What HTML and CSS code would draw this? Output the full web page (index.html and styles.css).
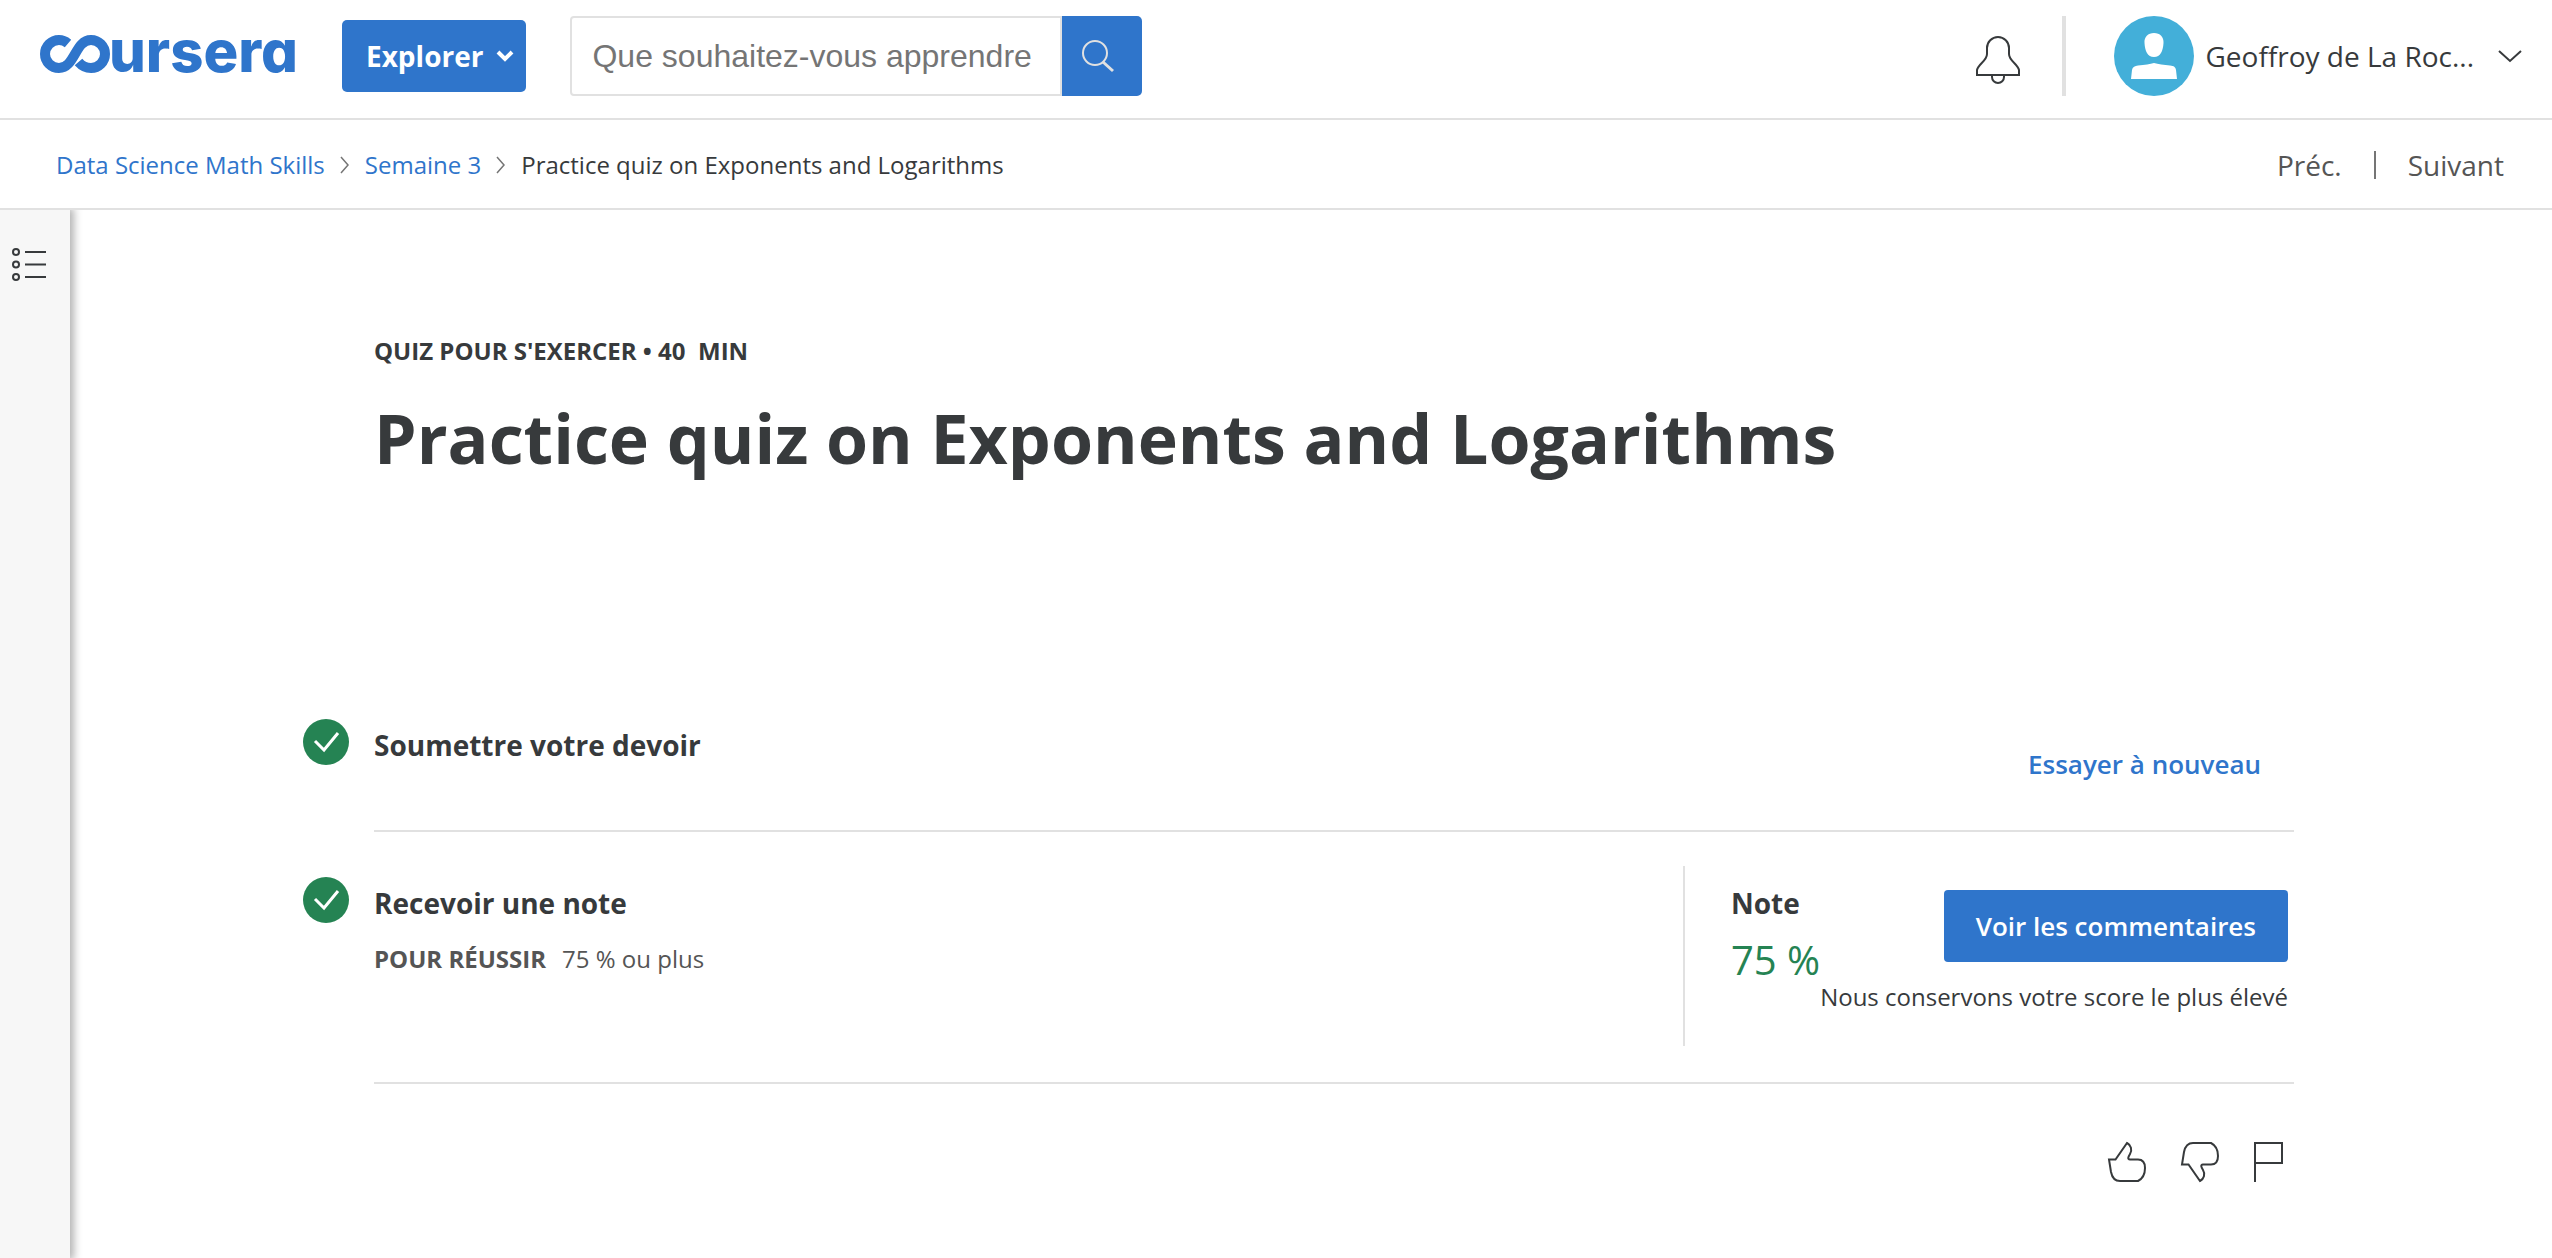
FILE: index.html
```html
<!DOCTYPE html>
<html lang="fr">
<head>
<meta charset="utf-8">
<title>Practice quiz on Exponents and Logarithms | Coursera</title>
<meta name="viewport" content="width=device-width, initial-scale=1">
<link rel="stylesheet" href="styles.css">
</head>
<body>
<header class="topbar">
  <a class="logo" href="#" aria-label="Coursera">
    <svg class="logo-mark" width="72" height="38" viewBox="0 0 72 38" aria-hidden="true"><path d="M28 8.500C25 6 22 5 19 5a14 14 0 1 0 0 28C35 33 35 5 51 5a14 14 0 1 1 0 28C46 33 42 31 38.500 27" fill="none" stroke="currentColor" stroke-width="10"/></svg>
    <span class="logo-text">ursera</span>
  </a>
  <button class="explore" type="button">Explorer
    <svg width="18" height="12" viewBox="0 0 18 12" aria-hidden="true"><path d="M2 2l7 7 7-7" fill="none" stroke="currentColor" stroke-width="4"/></svg>
  </button>
  <form class="search" role="search">
    <input class="search-input" type="text" placeholder="Que souhaitez-vous apprendre" aria-label="Que souhaitez-vous apprendre">
    <button class="search-button" type="button" aria-label="Rechercher">
      <svg width="34" height="34" viewBox="0 0 34 34" fill="none" stroke="currentColor" stroke-width="2" aria-hidden="true"><circle cx="14" cy="14" r="12"/><path d="M22 23l10 9" stroke-width="3"/></svg>
    </button>
  </form>
  <div class="account">
    <button class="bell" type="button" aria-label="Notifications">
      <svg width="46" height="50" viewBox="0 0 46 50" fill="none" stroke="currentColor" stroke-width="2" aria-hidden="true"><path d="M2 40V35C3 29 12 26 12 19V13a11 11 0 0 1 22 0V19C34 26 43 29 44 35V40ZM17 40V42a6 6 0 0 0 12 0V40"/></svg>
    </button>
    <button class="profile" type="button">
      <svg width="80" height="80" viewBox="0 0 80 80" aria-hidden="true"><circle cx="40" cy="40" r="40" fill="#43afd9"/><path d="M40 17c6 0 10 4 9.500 10C49 35 46.500 41 40 41S31 35 30.500 27C30 21 34 17 40 17ZM17 63L18 54C18.500 51 21 50 24 49.500 31 49 36 48 40 47 44 48 50 49 56 49.500 60 50 61.500 51 62 54L63 63Z" fill="#fff"/></svg>
      <span class="profile-name">Geoffroy de La Roc...</span>
      <svg width="24" height="14" viewBox="0 0 24 14" aria-hidden="true"><path d="M1 2l11 10L23 2" fill="none" stroke="currentColor" stroke-width="2"/></svg>
    </button>
  </div>
</header>

<div class="subbar">
  <nav class="crumbs" aria-label="Fil d'Ariane">
    <a href="#">Data Science Math Skills</a>
    <svg width="10" height="18" viewBox="0 0 10 18" aria-hidden="true"><path d="M1 1l7 8-7 8" fill="none" stroke="currentColor" stroke-width="1.500"/></svg>
    <a href="#">Semaine 3</a>
    <svg width="10" height="18" viewBox="0 0 10 18" aria-hidden="true"><path d="M1 1l7 8-7 8" fill="none" stroke="currentColor" stroke-width="1.500"/></svg>
    <span>Practice quiz on Exponents and Logarithms</span>
  </nav>
  <nav class="pager" aria-label="Navigation">
    <a href="#">Préc.</a>
    <a class="pager-next" href="#">Suivant</a>
  </nav>
</div>

<div class="layout">
  <aside class="rail">
    <button type="button" aria-label="Ouvrir le plan du cours">
      <svg width="36" height="36" viewBox="0 0 36 36" fill="none" stroke="currentColor" stroke-width="2" aria-hidden="true"><circle cx="4" cy="5" r="3"/><circle cx="4" cy="17.500" r="3"/><circle cx="4" cy="30" r="3"/><path d="M13 5h21M13 17.500h21M13 30h21"/></svg>
    </button>
  </aside>
  <main class="content">
    <p class="eyebrow">QUIZ POUR S'EXERCER • 40 &nbsp;MIN</p>
    <h1>Practice quiz on Exponents and Logarithms</h1>

    <section class="step step-submit">
      <svg class="check" width="46" height="46" viewBox="0 0 46 46" aria-hidden="true"><circle cx="23" cy="23" r="23" fill="#258353"/><path d="M12 22l9 9L35 14" fill="none" stroke="#fff" stroke-width="3"/></svg>
      <div class="step-body">
        <h2>Soumettre votre devoir</h2>
        <a class="retry" href="#">Essayer à nouveau</a>
      </div>
    </section>

    <section class="step step-grade">
      <svg class="check" width="46" height="46" viewBox="0 0 46 46" aria-hidden="true"><circle cx="23" cy="23" r="23" fill="#258353"/><path d="M12 22l9 9L35 14" fill="none" stroke="#fff" stroke-width="3"/></svg>
      <div class="step-body">
        <div>
          <h2>Recevoir une note</h2>
          <p class="pass"><strong>POUR RÉUSSIR</strong><span>75 % ou plus</span></p>
        </div>
        <div class="result">
          <div class="grade">
            <h2>Note</h2>
            <p class="score">75 %</p>
          </div>
          <div class="feedback">
            <button class="primary" type="button">Voir les commentaires</button>
            <p>Nous conservons votre score le plus élevé</p>
          </div>
        </div>
      </div>
    </section>

    <div class="reactions">
      <button type="button" aria-label="J'aime"><svg width="40" height="42" viewBox="0 0 40 42"><path d="M2 18.500H8.500L20 2C24 4 25.500 9 23 13 21.500 15.500 20 18.500 23 18.500H31C36 18.500 38 22 38 27 38 33 35 38 31 40H13C8 40 5 36 4 31Z"/></svg></button>
      <button type="button" aria-label="Je n'aime pas"><svg width="40" height="42" viewBox="0 0 40 42"><path d="M2 23.500H8.500L20 40C24 38 25.500 33 23 29 21.500 26.500 20 23.500 23 23.500H31C36 23.500 38 20 38 15 38 9 35 4 31 2H13C8 2 5 6 4 11Z"/></svg></button>
      <button type="button" aria-label="Signaler un problème"><svg width="32" height="42" viewBox="0 0 32 42"><path d="M2 41V2H29V22H2"/></svg></button>
    </div>
  </main>
</div>
</body>
</html>
```
FILE: styles.css
```css
* { box-sizing: border-box; }

body {
  margin: 0;
  min-height: 100vh;
  display: flex;
  flex-direction: column;
  background: #fff;
  color: #373a3c;
  font-family: "Open Sans", sans-serif;
  font-size: 24px;
  line-height: 36px;
}

h1, h2, p { margin: 0; }
a { color: #2f75cb; text-decoration: none; }
svg { display: block; flex: none; }

button {
  padding: 0;
  border: 0;
  background: none;
  color: inherit;
  font: inherit;
  cursor: pointer;
}

.topbar {
  display: flex;
  align-items: flex-start;
  height: 120px;
  padding: 16px 30px 0 40px;
  border-bottom: 2px solid #e1e1e1;
}

.logo {
  display: flex;
  width: 256px;
  margin-right: 46px;
  padding-top: 19px;
}

.logo-text {
  font-family: Inter, sans-serif;
  font-size: 58px;
  font-weight: 800;
  line-height: 32px;
  font-feature-settings: "cv11";
}

.logo-mark { margin-right: -3px; }

.explore {
  display: flex;
  align-items: center;
  gap: 13px;
  height: 72px;
  margin: 4px 44px 0 0;
  padding: 0 12px 0 24px;
  border-radius: 5px;
  background: #2f75cb;
  color: #fff;
  font-size: 28px;
  font-weight: 700;
}

.search { display: flex; }

.search-input {
  width: 492px;
  height: 80px;
  padding: 0 20px;
  border: 2px solid #e1e1e1;
  border-radius: 4px 0 0 4px;
  background: #fff;
  font-family: "Liberation Sans", sans-serif;
  font-size: 32px;
}

.search-input::placeholder { color: #757575; opacity: 1; }

.search-button {
  display: flex;
  align-items: center;
  width: 80px;
  padding-left: 19px;
  border-radius: 0 5px 5px 0;
  background: #2f75cb;
  color: #e1e1e1;
}

.account {
  display: flex;
  align-items: center;
  height: 80px;
  margin-left: auto;
}

.bell {
  margin-right: 41px;
  padding-top: 8px;
}

.profile {
  display: flex;
  align-items: center;
  height: 80px;
  padding-left: 48px;
  border-left: 4px solid #e1e1e1;
  font-size: 28px;
}

.profile-name { margin: 0 24px 0 11px; }

.subbar {
  display: flex;
  align-items: center;
  justify-content: space-between;
  height: 90px;
  padding: 2px 48px 0 56px;
  border-bottom: 2px solid #e1e1e1;
}

.crumbs {
  display: flex;
  align-items: center;
  gap: 15px;
}

.crumbs svg { color: #757575; }

.pager {
  display: flex;
  align-items: center;
  font-size: 28px;
  line-height: 28px;
}

.pager a { color: #555; }

.pager-next {
  margin-left: 32px;
  padding-left: 32px;
  border-left: 2px solid #757575;
}

.layout {
  display: flex;
  flex: 1;
}

.rail {
  flex: none;
  width: 70px;
  padding: 37px 0 0 12px;
  background: #f7f7f7;
  box-shadow: 2px 0 8px 2px rgba(0, 0, 0, 0.3);
  clip-path: inset(0 -16px 0 0);
}

.content {
  flex: 1;
  padding: 123px 258px 40px 233px;
}

.eyebrow {
  margin-left: 71px;
  font-weight: 700;
}

h1 {
  margin: 21px 0 233px 71px;
  font-size: 68px;
  line-height: 96px;
  font-weight: 700;
}

h2 {
  font-size: 28px;
  line-height: 36px;
  font-weight: 700;
}

.step { display: flex; gap: 25px; }

.step-body {
  display: flex;
  flex: 1;
  justify-content: space-between;
  border-bottom: 2px solid #e1e1e1;
}

.step-submit { height: 113px; }
.step-submit h2 { padding-top: 8px; }

.retry {
  padding: 27px 33px 0 0;
  font-size: 26px;
  font-weight: 600;
}

.step-grade {
  height: 252px;
  padding-top: 34px;
}

.step-grade .check { margin-top: 11px; }
.step-grade h2 { padding-top: 19px; }

.pass {
  display: flex;
  gap: 16px;
  margin-top: 20px;
  color: #555;
}

.result {
  display: flex;
  height: 180px;
  padding: 0 6px 0 46px;
  border-left: 2px solid #e1e1e1;
}

.score {
  margin-top: 15px;
  color: #258353;
  font-size: 40px;
  line-height: 48px;
}

.feedback {
  display: flex;
  flex-direction: column;
  align-items: flex-end;
  padding-top: 24px;
}

.primary {
  height: 72px;
  margin-bottom: 17px;
  padding: 0 32px;
  border-radius: 4px;
  background: #2f75cb;
  color: #fff;
  font-size: 26px;
  font-weight: 600;
}

.reactions {
  display: flex;
  justify-content: flex-end;
  gap: 33px;
  padding: 57px 9px 0 0;
}

.reactions svg {
  fill: none;
  stroke: #373a3c;
  stroke-width: 2;
}
```
